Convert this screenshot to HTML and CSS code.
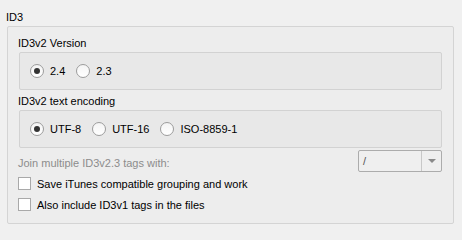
FILE: index.html
```html
<!DOCTYPE html>
<html>
<head>
<meta charset="utf-8">
<link rel="stylesheet" href="styles.css">
</head>
<body>
<div class="title">ID3</div>
<div class="group">
  <div class="label">ID3v2 Version</div>
  <div class="frame">
    <span class="radio checked"></span><span class="opt">2.4</span>
    <span class="radio"></span><span class="opt">2.3</span>
  </div>
  <div class="label label2">ID3v2 text encoding</div>
  <div class="frame">
    <span class="radio checked"></span><span class="opt">UTF-8</span>
    <span class="radio"></span><span class="opt">UTF-16</span>
    <span class="radio"></span><span class="opt">ISO-8859-1</span>
  </div>
  <div class="join">
    <span class="join-label">Join multiple ID3v2.3 tags with:</span>
    <div class="combo">
      <span class="combo-text">/</span>
      <span class="combo-btn"><span class="arrow"></span></span>
    </div>
  </div>
  <div class="check-row first"><span class="check"></span><span>Save iTunes compatible grouping and work</span></div>
  <div class="check-row"><span class="check"></span><span>Also include ID3v1 tags in the files</span></div>
</div>
</body>
</html>
```
FILE: styles.css
```css
html, body {
  margin: 0;
  padding: 0;
  background: #f0f0f0;
}
body {
  width: 462px;
  height: 233px;
  overflow: hidden;
  font-family: "Liberation Sans", Arial, sans-serif;
  font-size: 11px;
  line-height: 14px;
  color: #000;
}
.title {
  padding: 10px 0 0 6px;
  height: 16px;
}
.group {
  margin: 0 8px 0 7px;
  border: 1px solid #d4d4d4;
  border-radius: 2px;
  background: #ededed;
  padding: 9px 11px 8px 11px;
}
.label {
  height: 14px;
  margin-left: -1px;
  margin-bottom: 2px;
}
.label2 {
  margin-top: 4px;
}
.frame {
  box-sizing: border-box;
  height: 38px;
  border: 1px solid #d2d2d2;
  border-radius: 2px;
  background: #e8e8e8;
  padding-left: 10px;
  display: flex;
  align-items: center;
}
.radio {
  box-sizing: border-box;
  width: 14px;
  height: 14px;
  border: 1px solid #9c9c9c;
  border-radius: 50%;
  background: linear-gradient(#f4f4f4, #ffffff);
  position: relative;
  flex: none;
}
.radio.checked::after {
  content: "";
  position: absolute;
  left: 3px;
  top: 3px;
  width: 6px;
  height: 6px;
  border-radius: 50%;
  background: #333;
}
.opt {
  margin-left: 6px;
  margin-right: 11px;
}
.join {
  display: flex;
  justify-content: space-between;
  margin-top: 2px;
  height: 22px;
}
.join-label {
  color: #8c8c8c;
  margin-top: 6px;
  margin-left: -1px;
}
.combo {
  box-sizing: border-box;
  width: 84px;
  height: 22px;
  border: 1px solid #acacac;
  border-radius: 2px;
  background: #efefef;
  display: flex;
}
.combo-text {
  flex: 1;
  padding-left: 4px;
  line-height: 20px;
  color: #555;
  border-right: 1px solid #c8c8c8;
}
.combo-btn {
  width: 19px;
  display: flex;
  align-items: center;
  justify-content: center;
}
.arrow {
  width: 0;
  height: 0;
  border-left: 4px solid transparent;
  border-right: 4px solid transparent;
  border-top: 4px solid #8a8a8a;
}
.check-row {
  display: flex;
  align-items: center;
  height: 21px;
  margin-left: -1px;
}
.check-row.first {
  margin-top: 1px;
}
.check {
  box-sizing: border-box;
  width: 13px;
  height: 13px;
  border: 1px solid #a9a9a9;
  background: #fff;
  margin-right: 6px;
  flex: none;
}
```
